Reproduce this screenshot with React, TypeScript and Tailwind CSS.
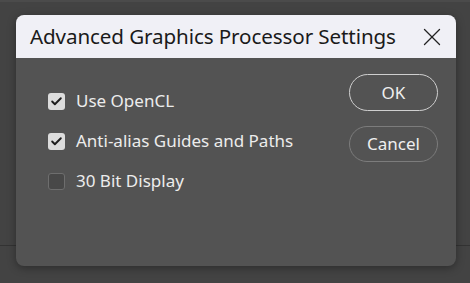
import { Check, X } from 'lucide-react';

type Option = { label: string; checked: boolean };

const options: Option[] = [
  { label: 'Use OpenCL', checked: true },
  { label: 'Anti-alias Guides and Paths', checked: true },
  { label: '30 Bit Display', checked: false },
];

function Checkbox({ checked }: { checked: boolean }) {
  return checked ? (
    <span className="flex h-[17px] w-[17px] shrink-0 items-center justify-center rounded-[3px] bg-[#dcdcdc]">
      <Check className="h-[13px] w-[13px] text-[#1e1e1e]" strokeWidth={3.5} />
    </span>
  ) : (
    <span className="h-[17px] w-[17px] shrink-0 rounded-[3px] border border-[#6e6e6e] bg-[#484848]" />
  );
}

export default function App() {
  return (
    <div
      className="relative h-[283px] w-[470px] overflow-hidden bg-[#434343]"
      style={{ fontFamily: '"Noto Sans", "Open Sans", sans-serif' }}
    >
      <div className="h-[2px] bg-[#4b4b4b]" />
      <div className="mt-[243px] h-px bg-[#333333]" />

      <div className="absolute left-[16px] top-[15px] flex h-[251px] w-[440px] flex-col overflow-hidden rounded-[8px] bg-[#535353] shadow-[0_2px_8px_rgba(0,0,0,0.35)]">
        <div className="flex h-[43px] items-center justify-between bg-[#f0f0f6] pl-[14px] pr-[9px]">
          <span className="whitespace-nowrap text-[20.6px] tracking-[-0.1px] text-[#1a1a1a]">
            Advanced Graphics Processor Settings
          </span>
          <X className="h-[30px] w-[30px] text-[#222]" strokeWidth={1.05} />
        </div>

        <div className="flex flex-1 justify-between pl-[32px] pr-[18px] pt-[16px]">
          <ul className="flex flex-col gap-[22px] pt-[18px]">
            {options.map((o) => (
              <li key={o.label} className="flex h-[18px] items-center gap-[11px]">
                <Checkbox checked={o.checked} />
                <span className="whitespace-nowrap text-[17px] text-[#ececec]">{o.label}</span>
              </li>
            ))}
          </ul>

          <div className="flex flex-col gap-[15px]">
            <button className="flex h-[37px] w-[89px] items-center justify-center rounded-full border-[1.5px] border-[#cfcfcf] text-[17px] text-[#efefef]">
              OK
            </button>
            <button className="flex h-[36px] w-[89px] items-center justify-center rounded-full border border-[#7c7c7c] text-[17px] text-[#efefef]">
              Cancel
            </button>
          </div>
        </div>
      </div>
    </div>
  );
}
